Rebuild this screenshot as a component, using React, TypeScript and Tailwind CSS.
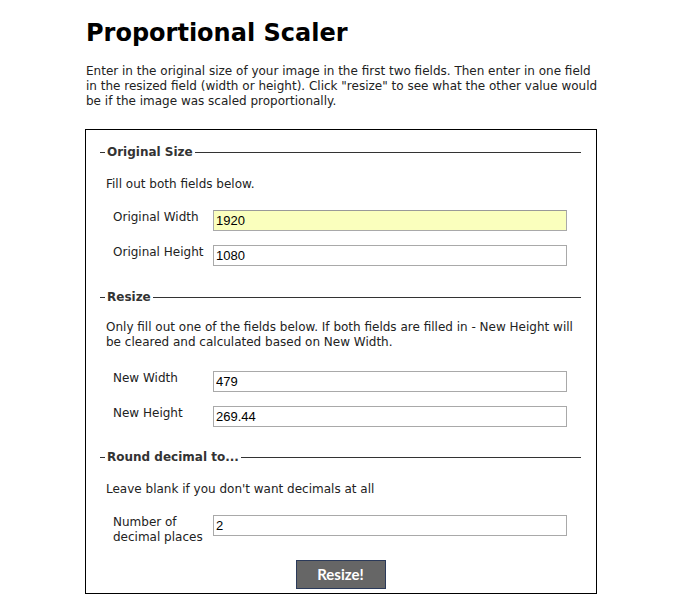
import React from 'react';

const font = { fontFamily: '"DejaVu Sans", Verdana, sans-serif' };

function Legend({ title }: { title: string }) {
    return (
        <div className="flex items-center h-[14px]">
            <div className="w-[5px] h-px bg-[#333]" />
            <span className="px-[2px] text-[12px] font-bold text-[#333] leading-[14px]">{title}</span>
            <div className="flex-1 h-px bg-[#333]" />
        </div>
    );
}

function Field({ label, value, filled }: { label: React.ReactNode; value: string; filled?: boolean }) {
    return (
        <div className="flex items-start">
            <label className="w-[113px] pl-[13px] text-[12px] leading-[15px] text-[#222]">{label}</label>
            <input
                type="text"
                defaultValue={value}
                className={`w-[354px] h-[21px] px-[2px] border border-[#a9a9a9] text-[13px] text-black outline-none ${filled ? 'bg-[#faffbd] border-t-[#999]' : 'bg-white'}`}
                style={{ fontFamily: '"Liberation Sans", Arial, sans-serif' }}
            />
        </div>
    );
}

export default function App() {
    return (
        <div className="min-h-screen bg-white text-[#222]" style={font}>
            <div className="w-[512px] ml-[85px] pt-[18px]">
                <h1 className="text-[24px] font-bold text-black leading-[30px] pl-px">Proportional Scaler</h1>
                <p className="mt-[16px] text-[12px] leading-[15px] pl-px whitespace-nowrap">
                    Enter in the original size of your image in the first two fields. Then enter in one field<br />
                    in the resized field (width or height). Click "resize" to see what the other value would<br />
                    be if the image was scaled proportionally.
                </p>

                <div className="mt-[20px] border border-black pt-[15px] pb-[4px] pl-[14px] pr-[15px]">
                    <Legend title="Original Size" />
                    <p className="mt-[18px] pl-[6px] text-[12px] leading-[15px]">Fill out both fields below.</p>
                    <div className="mt-[18px] flex flex-col gap-[14px]">
                        <Field label="Original Width" value="1920" filled />
                        <Field label="Original Height" value="1080" />
                    </div>

                    <div className="mt-[24px]">
                        <Legend title="Resize" />
                    </div>
                    <p className="mt-[16px] pl-[6px] text-[12px] leading-[15px] whitespace-nowrap">
                        Only fill out one of the fields below. If both fields are filled in - New Height will<br />
                        be cleared and calculated based on New Width.
                    </p>
                    <div className="mt-[21px] flex flex-col gap-[14px]">
                        <Field label="New Width" value="479" />
                        <Field label="New Height" value="269.44" />
                    </div>

                    <div className="mt-[23px]">
                        <Legend title="Round decimal to..." />
                    </div>
                    <p className="mt-[18px] pl-[6px] text-[12px] leading-[15px]">Leave blank if you don't want decimals at all</p>
                    <div className="mt-[18px]">
                        <Field label={<>Number of<br />decimal places</>} value="2" />
                    </div>

                    <div className="mt-[15px] flex justify-center">
                        <button
                            type="button"
                            className="w-[90px] h-[29px] bg-[#666] border border-[#2b3a5a] text-white text-[15px] font-bold"
                            style={{ fontFamily: 'Lato, "Open Sans", sans-serif' }}
                        >
                            Resize!
                        </button>
                    </div>
                </div>
            </div>
        </div>
    );
}
